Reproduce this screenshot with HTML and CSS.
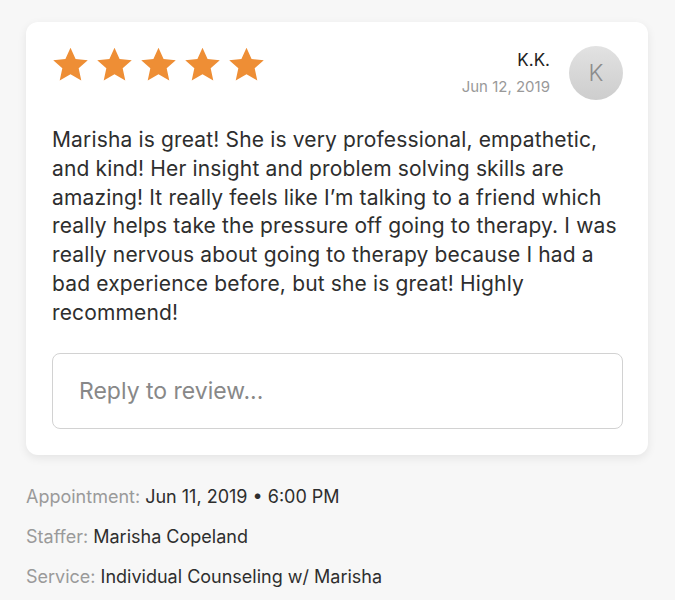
FILE: index.html
```html
<!DOCTYPE html>
<html lang="en">
<head>
  <meta charset="UTF-8" />
  <title>Review</title>
  <link rel="stylesheet" href="styles.css">
</head>
<body>

  <div class="page">
    <div class="card">
      <div class="card-head">
        <div class="stars">
          <svg class="star" viewBox="0 0 24 24"><path d="M12 1.2l3.3 7.2 7.9.8-5.9 5.3 1.7 7.8L12 18.3l-7 4 1.7-7.8L.8 9.2l7.9-.8z"/></svg>
          <svg class="star" viewBox="0 0 24 24"><path d="M12 1.2l3.3 7.2 7.9.8-5.9 5.3 1.7 7.8L12 18.3l-7 4 1.7-7.8L.8 9.2l7.9-.8z"/></svg>
          <svg class="star" viewBox="0 0 24 24"><path d="M12 1.2l3.3 7.2 7.9.8-5.9 5.3 1.7 7.8L12 18.3l-7 4 1.7-7.8L.8 9.2l7.9-.8z"/></svg>
          <svg class="star" viewBox="0 0 24 24"><path d="M12 1.2l3.3 7.2 7.9.8-5.9 5.3 1.7 7.8L12 18.3l-7 4 1.7-7.8L.8 9.2l7.9-.8z"/></svg>
          <svg class="star" viewBox="0 0 24 24"><path d="M12 1.2l3.3 7.2 7.9.8-5.9 5.3 1.7 7.8L12 18.3l-7 4 1.7-7.8L.8 9.2l7.9-.8z"/></svg>
        </div>
        <div class="author">
          <div class="author-info">
            <div class="author-name">K.K.</div>
            <div class="author-date">Jun 12, 2019</div>
          </div>
          <div class="avatar">K</div>
        </div>
      </div>

      <p class="review-text">Marisha is great! She is very professional, empathetic, and kind! Her insight and problem solving skills are amazing! It really feels like I’m talking to a friend which really helps take the pressure off going to therapy. I was really nervous about going to therapy because I had a bad experience before, but she is great! Highly recommend!</p>

      <div class="reply-box">Reply to review...</div>
    </div>

    <div class="details">
      <div class="detail-row"><span class="detail-label">Appointment:</span> Jun 11, 2019 • 6:00 PM</div>
      <div class="detail-row"><span class="detail-label">Staffer:</span> Marisha Copeland</div>
      <div class="detail-row"><span class="detail-label">Service:</span> Individual Counseling w/ Marisha</div>
    </div>
  </div>

</body>
</html>
```

FILE: styles.css
```css
body {
  margin: 0;
  background-color: #f7f7f7;
  font-family: Inter, "Open Sans", sans-serif;
  color: #2e2e2e;
}

.page {
  padding: 22px 27px 0 26px;
}

.card {
  background-color: white;
  border-radius: 12px;
  box-shadow: 0 3px 10px rgba(0, 0, 0, 0.08);
  padding: 24px 25px 26px 26px;
}

.card-head {
  display: flex;
  justify-content: space-between;
  align-items: flex-start;
}

.stars {
  display: flex;
  gap: 7px;
}

.star {
  width: 37px;
  height: 37px;
  fill: #ee8e35;
}

.author {
  display: flex;
  align-items: center;
  gap: 19px;
}

.author-info {
  text-align: right;
}

.author-name {
  font-size: 17px;
  line-height: 22px;
  color: #222;
}

.author-date {
  font-size: 15px;
  line-height: 20px;
  color: #999;
  margin-top: 6px;
}

.avatar {
  width: 54px;
  height: 54px;
  border-radius: 50%;
  background: linear-gradient(#e2e2e2, #cdcdcd);
  color: #8c8c8c;
  font-size: 23px;
  font-weight: 300;
  display: flex;
  align-items: center;
  justify-content: center;
}

.review-text {
  font-size: 21px;
  line-height: 28.8px;
  letter-spacing: 0.15px;
  margin: 26px 0 25px;
}

.reply-box {
  border: 1.5px solid #d2d2d2;
  border-radius: 8px;
  height: 74px;
  padding: 0 26px;
  display: flex;
  align-items: center;
  font-size: 23px;
  color: #888;
}

.details {
  padding-top: 22px;
  font-size: 18px;
}

.detail-row {
  line-height: 40px;
}

.detail-label {
  color: #9a9a9a;
}
```
